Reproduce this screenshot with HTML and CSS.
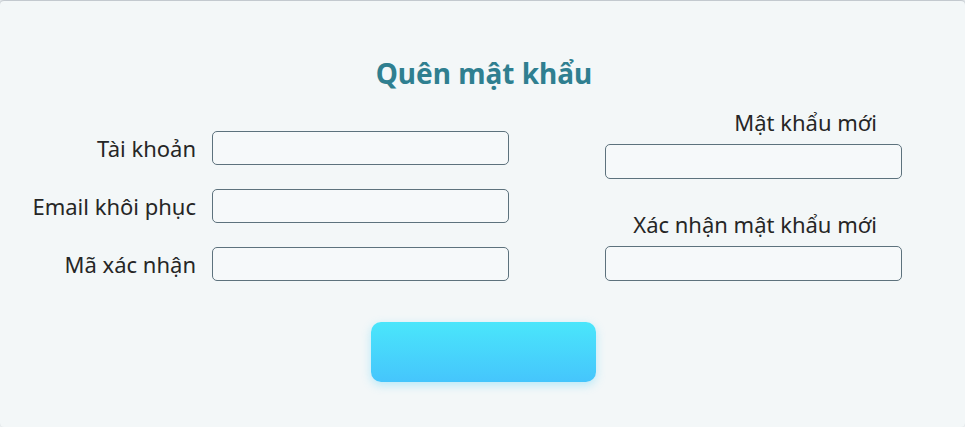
FILE: index.html
```html
<!DOCTYPE html>
<html lang="vi">
<head>
<meta charset="utf-8">
<title>Quên mật khẩu</title>
<link rel="stylesheet" href="styles.css">
</head>
<body>
<div class="card">
  <h1 class="title">Quên mật khẩu</h1>
  <div class="cols">
    <div class="left">
      <label class="lbl" for="acc">Tài khoản</label>
      <input class="field" id="acc" type="text">
      <label class="lbl" for="mail">Email khôi phục</label>
      <input class="field" id="mail" type="text">
      <label class="lbl" for="code">Mã xác nhận</label>
      <input class="field" id="code" type="text">
    </div>
    <div class="right">
      <label class="rlbl" for="np">Mật khẩu mới</label>
      <input class="field tall" id="np" type="password">
      <label class="rlbl second" for="cp">Xác nhận mật khẩu mới</label>
      <input class="field tall" id="cp" type="password">
    </div>
  </div>
  <div class="actions">
    <button class="btn" type="button"></button>
  </div>
</div>
</body>
</html>
```
FILE: styles.css
```css
html, body {
  margin: 0;
  padding: 0;
  background: #f3f7f8;
}
body {
  font-family: "Noto Sans", "Open Sans", sans-serif;
  color: #262626;
}
.card {
  margin-top: 1px;
  height: 426px;
  box-sizing: border-box;
  background: #f3f7f8;
  border-radius: 4px;
  box-shadow: 0 -1px 3px rgba(60, 70, 90, 0.4);
  padding-top: 51px;
}
.title {
  margin: 0;
  text-align: center;
  font-size: 28px;
  line-height: 42px;
  font-weight: 700;
  color: #2f7f90;
  padding-left: 3px;
}
.cols {
  display: flex;
  align-items: flex-start;
  margin-left: 16px;
}
.left {
  display: grid;
  grid-template-columns: 180px 297px;
  grid-auto-rows: 34px;
  column-gap: 16px;
  row-gap: 24px;
  align-items: center;
  margin-top: 37px;
}
.lbl {
  text-align: right;
  font-size: 22px;
  line-height: 26px;
  white-space: nowrap;
}
.field {
  box-sizing: border-box;
  width: 297px;
  height: 34px;
  margin: 0;
  border: 1px solid #5d727d;
  border-radius: 5px;
  background: #f6f9fa;
  font: inherit;
}
.field.tall {
  height: 35px;
}
.right {
  display: flex;
  flex-direction: column;
  margin-left: 96px;
  width: 297px;
  margin-top: 14px;
}
.rlbl {
  text-align: right;
  padding-right: 25px;
  font-size: 22px;
  line-height: 28px;
  margin-bottom: 8px;
  white-space: nowrap;
}
.rlbl.second {
  margin-top: 31px;
}
.actions {
  display: flex;
  justify-content: center;
  margin-top: 41px;
  padding-left: 2px;
}
.btn {
  width: 225px;
  height: 60px;
  border: none;
  border-radius: 10px;
  background: linear-gradient(180deg, #4ae6fb 0%, #45c5fc 100%);
  box-shadow: 0 3px 10px rgba(72, 205, 250, 0.35);
}
```
